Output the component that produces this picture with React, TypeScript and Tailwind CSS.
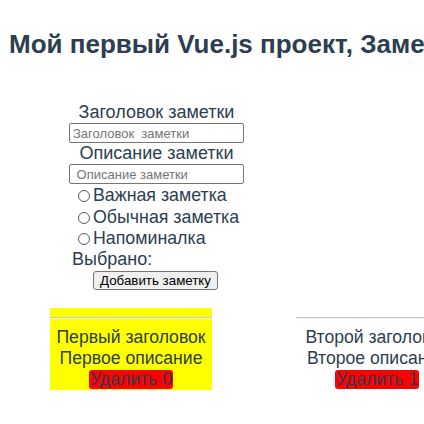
const notes = [
  { title: "Первый заголовок", text: "Первое описание", important: true },
  { title: "Второй заголовок", text: "Второе описание", important: false },
];

const kinds = ["Важная заметка", "Обычная заметка", "Напоминалка"];

export default function App() {
  return (
    <div className="w-[424px] h-[424px] overflow-hidden bg-white font-['Liberation_Sans',Arial,sans-serif] text-[#2c3e50]">
      <h1 className="pt-[29px] pl-[9px] whitespace-nowrap text-[26px] leading-[30px] font-bold">
        Мой первый Vue.js проект, Заметки
      </h1>

      {/* form */}
      <div className="mt-[43px] ml-[69px] w-[175px] flex flex-col text-[18px] leading-[21px]">
        <label className="self-center whitespace-nowrap">Заголовок заметки</label>
        <input
          className="h-[20px] w-[175px] rounded-[2px] border border-[#767676] px-[3px] text-[13px] placeholder:text-[#757575]"
          placeholder="Заголовок  заметки"
        />
        <label className="self-center whitespace-nowrap">Описание заметки</label>
        <input
          className="h-[20px] w-[175px] rounded-[2px] border border-[#767676] px-[3px] text-[13px] placeholder:text-[#757575]"
          placeholder=" Описание заметки"
        />
        <div className="mt-[1px] flex flex-col pl-[9px] text-[17.8px]">
          {kinds.map((k) => (
            <div key={k} className="flex h-[21.3px] items-end whitespace-nowrap">
              <span className="mb-[4px] mr-[3px] h-[12px] w-[12px] shrink-0 rounded-full border border-[#595959]" />
              <span>{k}</span>
            </div>
          ))}
        </div>
        <div className="pl-[3px]">Выбрано:</div>
        <button className="mt-[1px] ml-[24px] self-start h-[19px] rounded-[3px] border border-[#767676] bg-[#efefef] px-[6px] text-[13.33px] leading-[15px] text-black whitespace-nowrap">
          Добавить заметку
        </button>
      </div>

      {/* notes */}
      <div className="mt-[18px] ml-[50px] flex gap-[84px]">
        {notes.map((n, i) => (
          <div
            key={i}
            className={`w-[162px] shrink-0 flex flex-col items-center pt-[9px] pb-[1px] text-[17.6px] leading-[21px] ${
              n.important ? "bg-[#ffff00]" : ""
            }`}
          >
            <div className="h-[2px] w-full border-t border-[#c8c8c8] border-b border-b-[#eeeeee]" />
            <div className="mt-[8px] whitespace-nowrap">{n.title}</div>
            <div className="whitespace-nowrap">{n.text}</div>
            <button className="mt-[1px] h-[19px] rounded-[3px] bg-[#ff0000] px-[1px] text-[17.6px] leading-[19px] text-[#2c3e50] whitespace-nowrap">
              Удалить {i}
            </button>
          </div>
        ))}
      </div>
    </div>
  );
}
